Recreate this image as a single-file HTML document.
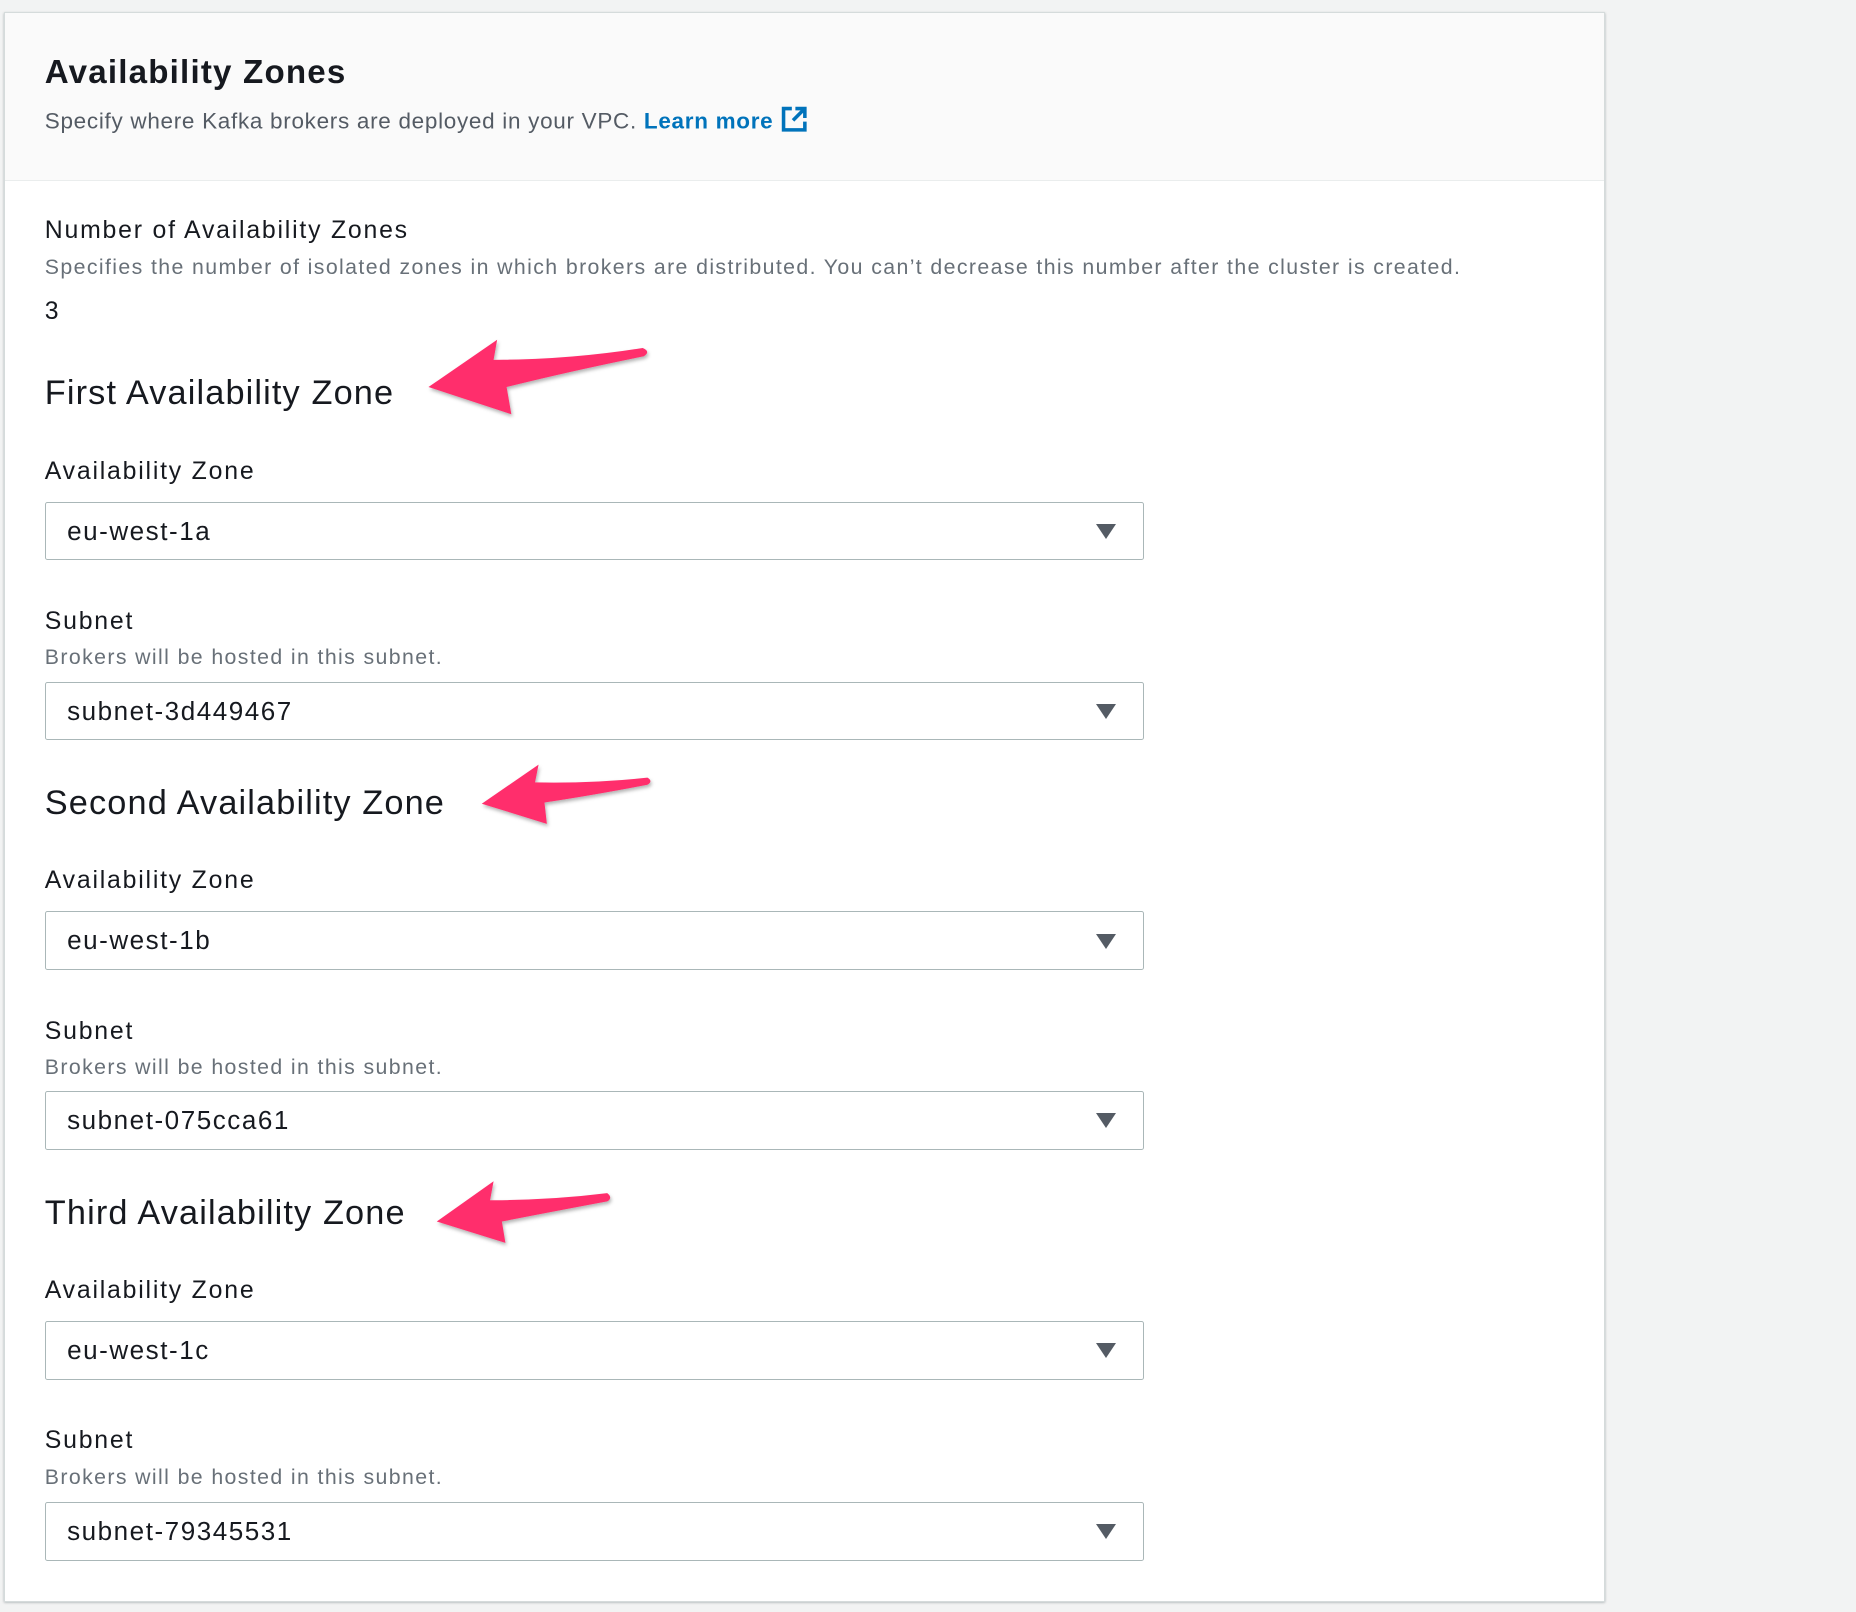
<!DOCTYPE html>
<html><head><meta charset="utf-8"><style>
html,body{margin:0;padding:0;}
body{width:1856px;height:1612px;overflow:hidden;background:#f2f3f3;font-family:"Liberation Sans",Arial,sans-serif;}
#w{zoom:1.18367;position:relative;width:1568px;height:1362px;}
.panel{position:absolute;left:3px;top:10px;width:1351px;height:1342px;background:#fff;border:1px solid #d5dbdb;box-shadow:0 1px 2px rgba(0,28,36,.3);}
.hdr{position:absolute;left:0;top:0;width:1351px;height:141px;background:#fafafa;border-bottom:1px solid #eaeded;}
.t{position:absolute;left:34px;white-space:nowrap;color:#16191f;}
.h1{font-size:28px;font-weight:bold;line-height:32px;letter-spacing:1px;}
.sub{font-size:19px;color:#545b64;line-height:24px;letter-spacing:0.6px;}
.lbl{font-size:21px;line-height:26px;letter-spacing:1.5px;}
.desc{font-size:18px;color:#687078;line-height:24px;letter-spacing:1.17px;}
.h2{font-size:29px;line-height:34px;letter-spacing:0.95px;}
.dd{position:absolute;left:34px;width:927px;height:48px;border:1px solid #aab7b8;border-radius:2px;background:#fff;}
.dd span{position:absolute;left:18px;top:11px;font-size:22px;line-height:26px;color:#16191f;letter-spacing:1.3px;}
.dd i{position:absolute;left:887px;top:18px;width:0;height:0;border-left:9px solid transparent;border-right:9px solid transparent;border-top:13px solid #545b64;}
a{color:#0073bb;font-weight:bold;text-decoration:none;}
svg.ar{position:absolute;left:0;top:0;}
</style></head><body><div id="w">
<div class="panel">
 <div class="hdr">
  <div class="t h1" style="top:35px">Availability Zones</div>
  <div class="t sub" style="top:78px">Specify where Kafka brokers are deployed in your VPC. <a>Learn more</a> <svg width="24" height="24" viewBox="0 0 24 24" style="vertical-align:-4px"><path d="M10 3H3v18h18v-7" fill="none" stroke="#0073bb" stroke-width="3"/><path d="M13 3h8v8M21 3l-10 10" fill="none" stroke="#0073bb" stroke-width="3"/></svg></div>
 </div>
 <div class="t lbl" style="top:172px">Number of Availability Zones</div>
 <div class="t desc" style="top:203px">Specifies the number of isolated zones in which brokers are distributed. You can’t decrease this number after the cluster is created.</div>
 <div class="t lbl" style="top:240px">3</div>

 <div class="t h2" style="top:304px">First Availability Zone</div>
 <div class="t lbl" style="top:375px">Availability Zone</div>
 <div class="dd" style="top:413px"><span>eu-west-1a</span><i></i></div>
 <div class="t lbl" style="top:502px">Subnet</div>
 <div class="t desc" style="top:532px">Brokers will be hosted in this subnet.</div>
 <div class="dd" style="top:565px"><span>subnet-3d449467</span><i></i></div>

 <div class="t h2" style="top:651px">Second Availability Zone</div>
 <div class="t lbl" style="top:721px">Availability Zone</div>
 <div class="dd" style="top:759px"><span>eu-west-1b</span><i></i></div>
 <div class="t lbl" style="top:848px">Subnet</div>
 <div class="t desc" style="top:879px">Brokers will be hosted in this subnet.</div>
 <div class="dd" style="top:911px"><span>subnet-075cca61</span><i></i></div>

 <div class="t h2" style="top:997px">Third Availability Zone</div>
 <div class="t lbl" style="top:1067px">Availability Zone</div>
 <div class="dd" style="top:1105px"><span>eu-west-1c</span><i></i></div>
 <div class="t lbl" style="top:1194px">Subnet</div>
 <div class="t desc" style="top:1225px">Brokers will be hosted in this subnet.</div>
 <div class="dd" style="top:1258px"><span>subnet-79345531</span><i></i></div>
</div>
<svg class="ar" width="1568" height="1362">
 <defs><filter id="s" x="-10%" y="-10%" width="130%" height="140%"><feDropShadow dx="1" dy="2" stdDeviation="1.5" flood-color="#000" flood-opacity="0.3"/></filter></defs>
 <g fill="#ff2e6c" filter="url(#s)">
  <path d="M362,327 L420,287 L417,304 Q480,304 543,294 Q550,297 544,301 Q480,314 428,327 L432,350 Z"/>
  <path d="M407,679 L455,646 L452,661 Q500,662 547,657 Q552,660 547,663 Q500,672 460,678 L462,696 Z"/>
  <path d="M369,1032 L417,998 L414,1014 Q465,1014 513,1008 Q518,1012 513,1015 Q465,1024 424,1032 L427,1050 Z"/>
 </g>
</svg>
</div></body></html>
